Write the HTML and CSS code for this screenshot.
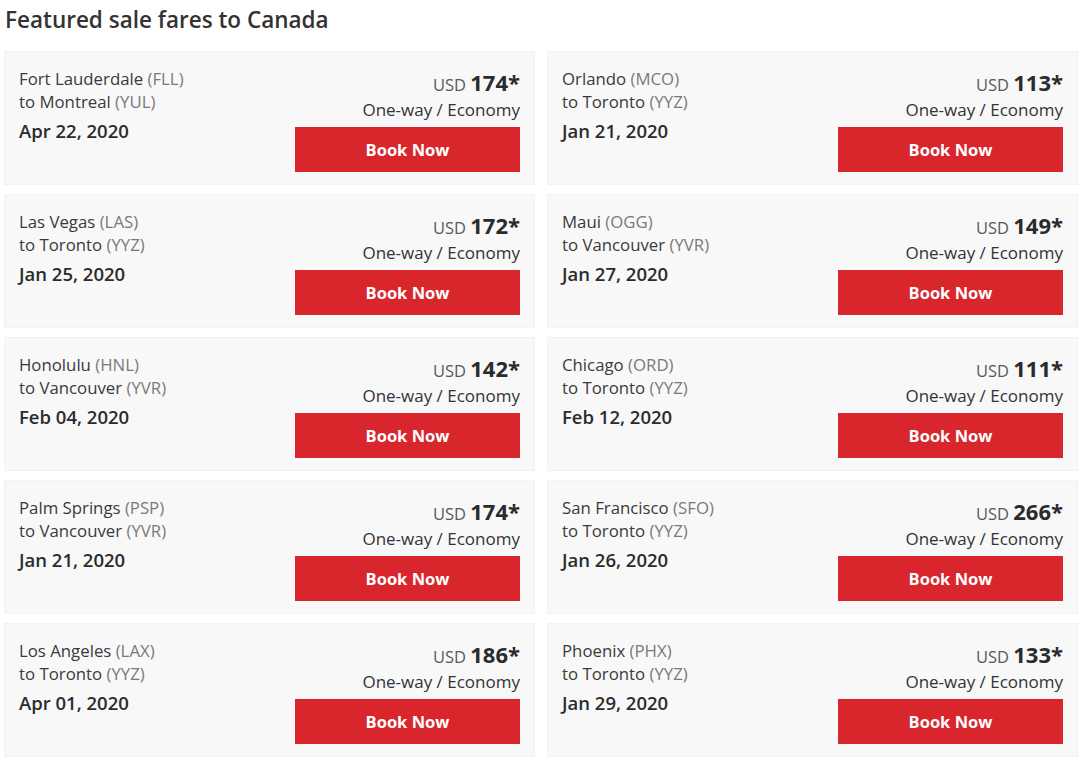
FILE: index.html
```html
<!DOCTYPE html>
<html>
<head>
<meta charset="utf-8">
<link rel="stylesheet" href="styles.css">
</head>
<body>
<h1 class="title">Featured sale fares to Canada</h1>
<div class="grid">
  <div class="card">
    <div class="route">
      <div class="line">Fort Lauderdale <span class="code">(FLL)</span></div>
      <div class="line">to Montreal <span class="code">(YUL)</span></div>
      <div class="date">Apr 22, 2020</div>
    </div>
    <div class="fare">
      <div class="price"><span class="cur">USD</span> <span class="amt">174*</span></div>
      <div class="type">One-way / Economy</div>
      <a class="btn">Book Now</a>
    </div>
  </div>
  <div class="card">
    <div class="route">
      <div class="line">Orlando <span class="code">(MCO)</span></div>
      <div class="line">to Toronto <span class="code">(YYZ)</span></div>
      <div class="date">Jan 21, 2020</div>
    </div>
    <div class="fare">
      <div class="price"><span class="cur">USD</span> <span class="amt">113*</span></div>
      <div class="type">One-way / Economy</div>
      <a class="btn">Book Now</a>
    </div>
  </div>
  <div class="card">
    <div class="route">
      <div class="line">Las Vegas <span class="code">(LAS)</span></div>
      <div class="line">to Toronto <span class="code">(YYZ)</span></div>
      <div class="date">Jan 25, 2020</div>
    </div>
    <div class="fare">
      <div class="price"><span class="cur">USD</span> <span class="amt">172*</span></div>
      <div class="type">One-way / Economy</div>
      <a class="btn">Book Now</a>
    </div>
  </div>
  <div class="card">
    <div class="route">
      <div class="line">Maui <span class="code">(OGG)</span></div>
      <div class="line">to Vancouver <span class="code">(YVR)</span></div>
      <div class="date">Jan 27, 2020</div>
    </div>
    <div class="fare">
      <div class="price"><span class="cur">USD</span> <span class="amt">149*</span></div>
      <div class="type">One-way / Economy</div>
      <a class="btn">Book Now</a>
    </div>
  </div>
  <div class="card">
    <div class="route">
      <div class="line">Honolulu <span class="code">(HNL)</span></div>
      <div class="line">to Vancouver <span class="code">(YVR)</span></div>
      <div class="date">Feb 04, 2020</div>
    </div>
    <div class="fare">
      <div class="price"><span class="cur">USD</span> <span class="amt">142*</span></div>
      <div class="type">One-way / Economy</div>
      <a class="btn">Book Now</a>
    </div>
  </div>
  <div class="card">
    <div class="route">
      <div class="line">Chicago <span class="code">(ORD)</span></div>
      <div class="line">to Toronto <span class="code">(YYZ)</span></div>
      <div class="date">Feb 12, 2020</div>
    </div>
    <div class="fare">
      <div class="price"><span class="cur">USD</span> <span class="amt">111*</span></div>
      <div class="type">One-way / Economy</div>
      <a class="btn">Book Now</a>
    </div>
  </div>
  <div class="card">
    <div class="route">
      <div class="line">Palm Springs <span class="code">(PSP)</span></div>
      <div class="line">to Vancouver <span class="code">(YVR)</span></div>
      <div class="date">Jan 21, 2020</div>
    </div>
    <div class="fare">
      <div class="price"><span class="cur">USD</span> <span class="amt">174*</span></div>
      <div class="type">One-way / Economy</div>
      <a class="btn">Book Now</a>
    </div>
  </div>
  <div class="card">
    <div class="route">
      <div class="line">San Francisco <span class="code">(SFO)</span></div>
      <div class="line">to Toronto <span class="code">(YYZ)</span></div>
      <div class="date">Jan 26, 2020</div>
    </div>
    <div class="fare">
      <div class="price"><span class="cur">USD</span> <span class="amt">266*</span></div>
      <div class="type">One-way / Economy</div>
      <a class="btn">Book Now</a>
    </div>
  </div>
  <div class="card">
    <div class="route">
      <div class="line">Los Angeles <span class="code">(LAX)</span></div>
      <div class="line">to Toronto <span class="code">(YYZ)</span></div>
      <div class="date">Apr 01, 2020</div>
    </div>
    <div class="fare">
      <div class="price"><span class="cur">USD</span> <span class="amt">186*</span></div>
      <div class="type">One-way / Economy</div>
      <a class="btn">Book Now</a>
    </div>
  </div>
  <div class="card">
    <div class="route">
      <div class="line">Phoenix <span class="code">(PHX)</span></div>
      <div class="line">to Toronto <span class="code">(YYZ)</span></div>
      <div class="date">Jan 29, 2020</div>
    </div>
    <div class="fare">
      <div class="price"><span class="cur">USD</span> <span class="amt">133*</span></div>
      <div class="type">One-way / Economy</div>
      <a class="btn">Book Now</a>
    </div>
  </div>
</div>
</body>
</html>
```
FILE: styles.css
```css
html, body {
  margin: 0;
  padding: 0;
  background: #ffffff;
}
body {
  font-family: "Open Sans", "Liberation Sans", sans-serif;
  color: #333333;
  padding: 4px 2px 0 4px;
}
.title {
  margin: 0 0 0 1px;
  font-size: 22.5px;
  font-weight: 600;
  line-height: 32px;
  color: #333333;
}
.grid {
  margin-top: 15px;
  display: grid;
  grid-template-columns: 531px 531px;
  column-gap: 12px;
  row-gap: 9px;
}
.card {
  background: #f8f8f8;
  border: 1px solid #f3f3f3;
  height: 134px;
  box-sizing: border-box;
  padding: 15px 14px 13px 14px;
  display: flex;
  justify-content: space-between;
}
.line {
  font-size: 16.8px;
  line-height: 23px;
  color: #3a3a3a;
  white-space: nowrap;
}
.code {
  color: #7a7a7a;
}
.date {
  margin-top: 6px;
  font-size: 18.5px;
  font-weight: 600;
  line-height: 24px;
  color: #2b2b2b;
  white-space: nowrap;
}
.fare {
  width: 225px;
  display: flex;
  flex-direction: column;
  align-items: flex-end;
}
.price {
  height: 30px;
  line-height: 30px;
  white-space: nowrap;
}
.cur {
  font-size: 16.5px;
  color: #5a5a5a;
  line-height: 30px;
}
.amt {
  font-size: 22px;
  font-weight: 700;
  color: #2b2b2b;
  line-height: 30px;
}
.type {
  height: 26px;
  font-size: 17px;
  line-height: 26px;
  color: #333333;
  white-space: nowrap;
}
.btn {
  margin-top: 4px;
  width: 225px;
  height: 45px;
  flex: none;
  background: #d9262d;
  color: #ffffff;
  font-size: 16.5px;
  font-weight: 700;
  display: flex;
  align-items: center;
  justify-content: center;
}
```
